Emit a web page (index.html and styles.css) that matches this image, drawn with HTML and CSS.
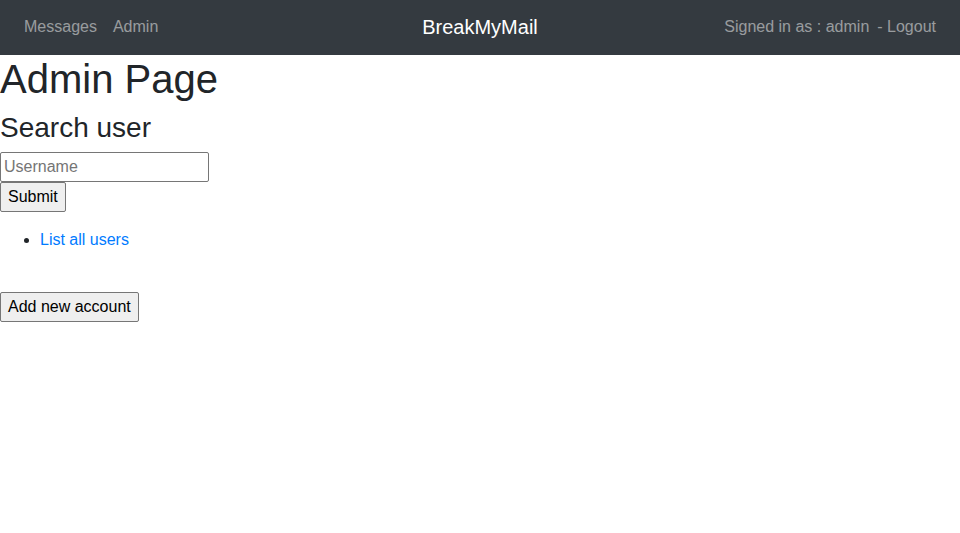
FILE: index.html
```html
<!DOCTYPE html>
<html>
<head>
<meta charset="utf-8">
<link rel="stylesheet" href="styles.css">
</head>
<body>
<nav class="navbar">
  <div class="nav-left">
    <a class="nav-link" href="#">Messages</a>
    <a class="nav-link" href="#">Admin</a>
  </div>
  <a class="brand" href="#">BreakMyMail</a>
  <div class="nav-right">
    <span class="nav-text">Signed in as : admin</span>
    <a class="nav-link logout" href="#">- Logout</a>
  </div>
</nav>
<main class="content">
  <h1 class="title">Admin Page</h1>
  <h3 class="subtitle">Search user</h3>
  <form class="search-form">
    <input class="text-input" type="text" placeholder="Username">
    <button class="btn" type="button">Submit</button>
  </form>
  <ul class="link-list">
    <li><a class="link" href="#">List all users</a></li>
  </ul>
  <div class="actions">
    <button class="btn" type="button">Add new account</button>
  </div>
</main>
</body>
</html>
```

FILE: styles.css
```css
html, body {
  margin: 0;
  padding: 0;
}
body {
  font-family: "Liberation Sans", Arial, sans-serif;
  font-size: 16px;
  line-height: 1.5;
  color: #212529;
  background: #fff;
}
.navbar {
  height: 55px;
  box-sizing: border-box;
  background: #343a40;
  display: grid;
  grid-template-columns: 1fr auto 1fr;
  align-items: center;
  padding: 0 16px 2px;
}
.nav-left {
  display: flex;
  justify-self: start;
}
.nav-right {
  display: flex;
  justify-self: end;
  align-items: center;
}
.nav-link {
  color: rgba(255, 255, 255, 0.5);
  text-decoration: none;
  padding: 8px;
}
.nav-text {
  color: rgba(255, 255, 255, 0.5);
  padding: 8px 0 8px 8px;
}
.logout {
  padding-left: 8px;
}
.brand {
  color: #fff;
  font-size: 20px;
  text-decoration: none;
  padding-top: 1px;
}
.title {
  font-size: 40px;
  font-weight: 500;
  line-height: 1.2;
  margin: 0 0 8px;
}
.subtitle {
  font-size: 28px;
  font-weight: 500;
  line-height: 1.2;
  margin: 0 0 7px;
}
.search-form {
  display: flex;
  flex-direction: column;
  align-items: flex-start;
  margin: 0;
}
.text-input {
  width: 209px;
  height: 30px;
  box-sizing: border-box;
  font-family: inherit;
  font-size: 16px;
  margin: 0;
  padding: 1px 3px;
  border: 1px solid #767676;
  border-radius: 2px;
  color: #212529;
}
.text-input::placeholder {
  color: #757575;
}
.btn {
  height: 30px;
  box-sizing: border-box;
  font-family: inherit;
  font-size: 16px;
  margin: 0;
  padding: 1px 7px;
  background: #efefef;
  color: #000;
  border: 1px solid #767676;
  border-radius: 2px;
}
.link-list {
  margin: 16px 0 16px;
  padding-left: 40px;
}
.link {
  color: #007bff;
  text-decoration: none;
}
.actions {
  padding-top: 24px;
}
```
